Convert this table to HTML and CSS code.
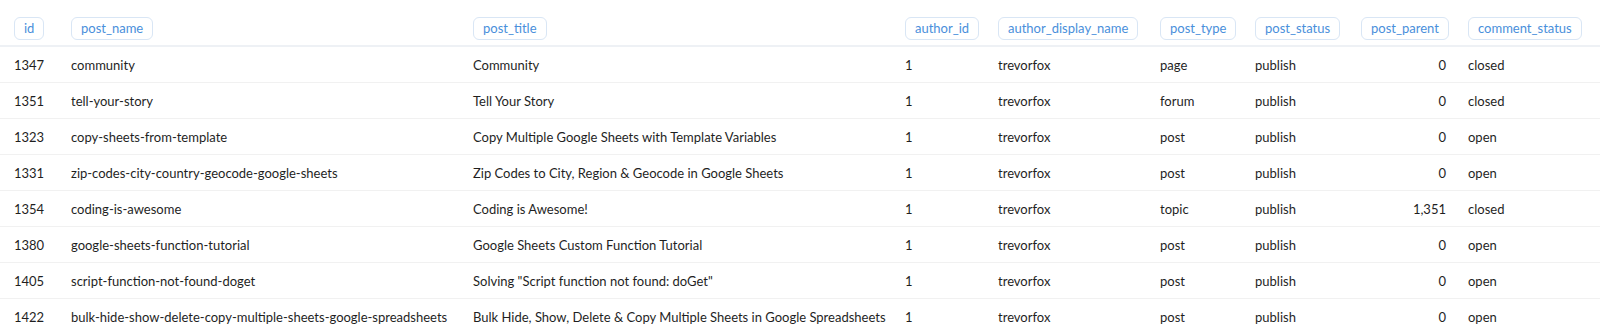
FILE: index.html
```html
<!DOCTYPE html>
<html>
<head>
<meta charset="utf-8">
<link rel="stylesheet" href="styles.css">
</head>
<body>
<table class="grid">
  <colgroup>
    <col class="c-id"><col class="c-name"><col class="c-title"><col class="c-aid"><col class="c-adn"><col class="c-type"><col class="c-status"><col class="c-parent"><col class="c-comment">
  </colgroup>
  <thead>
    <tr>
      <th><span class="pill">id</span></th>
      <th><span class="pill">post_name</span></th>
      <th><span class="pill">post_title</span></th>
      <th><span class="pill">author_id</span></th>
      <th><span class="pill">author_display_name</span></th>
      <th><span class="pill">post_type</span></th>
      <th><span class="pill">post_status</span></th>
      <th class="num"><span class="pill">post_parent</span></th>
      <th><span class="pill">comment_status</span></th>
    </tr>
  </thead>
  <tbody>
    <tr><td>1347</td><td>community</td><td>Community</td><td>1</td><td>trevorfox</td><td>page</td><td>publish</td><td class="num">0</td><td>closed</td></tr>
    <tr><td>1351</td><td>tell-your-story</td><td>Tell Your Story</td><td>1</td><td>trevorfox</td><td>forum</td><td>publish</td><td class="num">0</td><td>closed</td></tr>
    <tr><td>1323</td><td>copy-sheets-from-template</td><td>Copy Multiple Google Sheets with Template Variables</td><td>1</td><td>trevorfox</td><td>post</td><td>publish</td><td class="num">0</td><td>open</td></tr>
    <tr><td>1331</td><td>zip-codes-city-country-geocode-google-sheets</td><td>Zip Codes to City, Region &amp; Geocode in Google Sheets</td><td>1</td><td>trevorfox</td><td>post</td><td>publish</td><td class="num">0</td><td>open</td></tr>
    <tr><td>1354</td><td>coding-is-awesome</td><td>Coding is Awesome!</td><td>1</td><td>trevorfox</td><td>topic</td><td>publish</td><td class="num">1,351</td><td>closed</td></tr>
    <tr><td>1380</td><td>google-sheets-function-tutorial</td><td>Google Sheets Custom Function Tutorial</td><td>1</td><td>trevorfox</td><td>post</td><td>publish</td><td class="num">0</td><td>open</td></tr>
    <tr><td>1405</td><td>script-function-not-found-doget</td><td>Solving "Script function not found: doGet"</td><td>1</td><td>trevorfox</td><td>post</td><td>publish</td><td class="num">0</td><td>open</td></tr>
    <tr><td>1422</td><td>bulk-hide-show-delete-copy-multiple-sheets-google-spreadsheets</td><td>Bulk Hide, Show, Delete &amp; Copy Multiple Sheets in Google Spreadsheets</td><td>1</td><td>trevorfox</td><td>post</td><td>publish</td><td class="num">0</td><td>open</td></tr>
  </tbody>
</table>
</body>
</html>
```
FILE: styles.css
```css
html, body {
  margin: 0;
  padding: 0;
  background: #ffffff;
}
body {
  font-family: Lato, "Noto Sans", sans-serif;
  font-size: 13px;
  color: #1f1f1f;
}
.grid {
  width: 100%;
  table-layout: fixed;
  border-collapse: collapse;
}
.c-id { width: 60px; }
.c-name { width: 402px; }
.c-title { width: 432px; }
.c-aid { width: 93px; }
.c-adn { width: 162px; }
.c-type { width: 95px; }
.c-status { width: 106px; }
.c-parent { width: 107px; }
.c-comment { width: auto; }
.grid th {
  text-align: left;
  font-weight: 400;
  padding: 17px 11px 5px;
  border-bottom: 2px solid #eef1f5;
  white-space: nowrap;
}
.grid th:first-child,
.grid td:first-child {
  padding-left: 14px;
}
.pill {
  display: inline-block;
  height: 21px;
  line-height: 21px;
  padding: 0 9px;
  border: 1px solid #d9e6f5;
  border-radius: 6px;
  color: #4a8fdb;
  font-size: 13px;
}
.grid td {
  height: 35px;
  padding: 0 11px;
  border-bottom: 1px solid #f1f1f1;
  white-space: nowrap;
  vertical-align: middle;
}
.grid .num {
  text-align: right;
}
```
